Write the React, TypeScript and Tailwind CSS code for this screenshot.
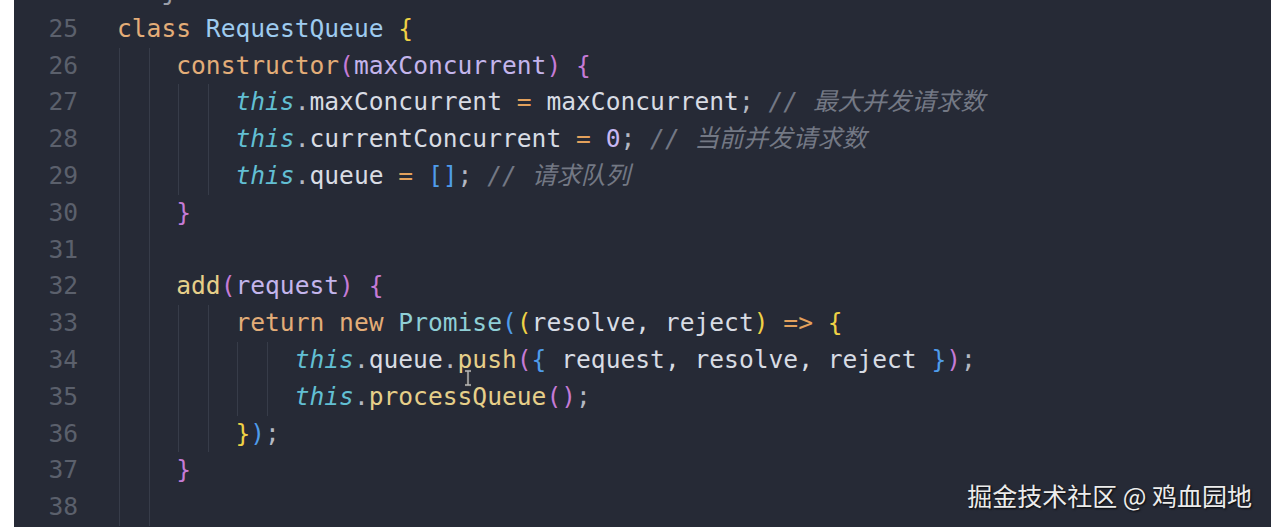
import React from "react";

type Tok = [string, string?];
type Line = { n: number; indent: number; toks: Tok[] };

const C = {
  kw: "text-[#e3ad78]",
  cls: "text-[#9ecbef]",
  y: "text-[#efd145]",
  p: "text-[#c57bd6]",
  prm: "text-[#c4b5ec]",
  th: "text-[#62bfd3] italic",
  w: "text-[#d8dce4]",
  op: "text-[#e3a15c]",
  num: "text-[#c7b7f2]",
  cm: "text-[#737884] italic",
  b: "text-[#4f9cea]",
  fn: "text-[#e6cf89]",
  pr: "text-[#8fcfd6]",
  pun: "text-[#b4b8c2]",
};

const lines: Line[] = [
  { n: 24, indent: 0, toks: [["   "], ["j", "text-[#9a9ea8]"]] },
  { n: 25, indent: 0, toks: [["class", C.kw], [" "], ["RequestQueue", C.cls], [" "], ["{", C.y]] },
  { n: 26, indent: 4, toks: [["constructor", C.kw], ["(", C.p], ["maxConcurrent", C.prm], [")", C.p], [" "], ["{", C.p]] },
  {
    n: 27,
    indent: 8,
    toks: [["this", C.th], [".", C.pun], ["maxConcurrent", C.w], [" "], ["=", C.op], [" "], ["maxConcurrent", C.w], [";", C.pun], [" "], ["// 最大并发请求数", C.cm]],
  },
  {
    n: 28,
    indent: 8,
    toks: [["this", C.th], [".", C.pun], ["currentConcurrent", C.w], [" "], ["=", C.op], [" "], ["0", C.num], [";", C.pun], [" "], ["// 当前并发请求数", C.cm]],
  },
  {
    n: 29,
    indent: 8,
    toks: [["this", C.th], [".", C.pun], ["queue", C.w], [" "], ["=", C.op], [" "], ["[]", C.b], [";", C.pun], [" "], ["// 请求队列", C.cm]],
  },
  { n: 30, indent: 4, toks: [["}", C.p]] },
  { n: 31, indent: 4, toks: [] },
  { n: 32, indent: 4, toks: [["add", C.fn], ["(", C.p], ["request", C.prm], [")", C.p], [" "], ["{", C.p]] },
  {
    n: 33,
    indent: 8,
    toks: [["return new", C.kw], [" "], ["Promise", C.pr], ["(", C.b], ["(", C.y], ["resolve, reject", C.w], [")", C.y], [" "], ["=>", C.op], [" "], ["{", C.y]],
  },
  {
    n: 34,
    indent: 12,
    toks: [["this", C.th], [".", C.pun], ["queue", C.w], [".", C.pun], ["push", C.fn], ["(", C.p], ["{", C.b], [" request, resolve, reject ", C.w], ["}", C.b], [")", C.p], [";", C.pun]],
  },
  { n: 35, indent: 12, toks: [["this", C.th], [".", C.pun], ["processQueue", C.fn], ["()", C.p], [";", C.pun]] },
  { n: 36, indent: 8, toks: [["}", C.y], [")", C.b], [";", C.pun]] },
  { n: 37, indent: 4, toks: [["}", C.p]] },
  { n: 38, indent: 4, toks: [] },
];

export default function App() {
  return (
    <div className="flex h-[527px] w-[1271px] overflow-hidden bg-white">
      <div className="w-[14px] shrink-0 bg-white" />
      <div className="relative flex-1 overflow-hidden bg-[#262a36] font-['DejaVu_Sans_Mono','Noto_Sans_CJK_SC',monospace] text-[24.6px]">
        <div className="-mt-[26px] flex flex-col">
          {lines.map((l) => (
            <div key={l.n} className="flex h-[36.8px] items-stretch leading-[36.8px]">
              <span className="w-[64px] shrink-0 text-right text-[#5b606c]">{l.n === 24 ? "" : l.n}</span>
              <span className="w-[39px] shrink-0" />
              {Array.from({ length: l.indent / 2 }).map((_, i) => (
                <span key={i} className="ml-[2px] h-full w-[calc(2ch-2px)] shrink-0 border-l border-[#373c49]" />
              ))}
              <span className="whitespace-pre">
                {l.toks.map((t, i) => (
                  <span key={i} className={t[1] ?? C.w}>
                    {t[0]}
                  </span>
                ))}
              </span>
            </div>
          ))}
        </div>

        <svg className="absolute left-[449px] top-[369px]" width="10" height="18" viewBox="0 0 10 18">
          <path d="M2 2h6M5 2v14M2 16h6" stroke="#3a3a3a" strokeWidth="3" fill="none" />
          <path d="M2 2h6M5 2v14M2 16h6" stroke="#b9b9b9" strokeWidth="1.4" fill="none" />
        </svg>

        <div className="absolute bottom-[19px] right-[19px] font-['Noto_Sans_CJK_SC',sans-serif] text-[25px] leading-[26px] text-[#ececec] [text-shadow:1px_1px_2px_rgba(0,0,0,0.85)]">
          掘金技术社区 @ 鸡血园地
        </div>
      </div>
    </div>
  );
}
